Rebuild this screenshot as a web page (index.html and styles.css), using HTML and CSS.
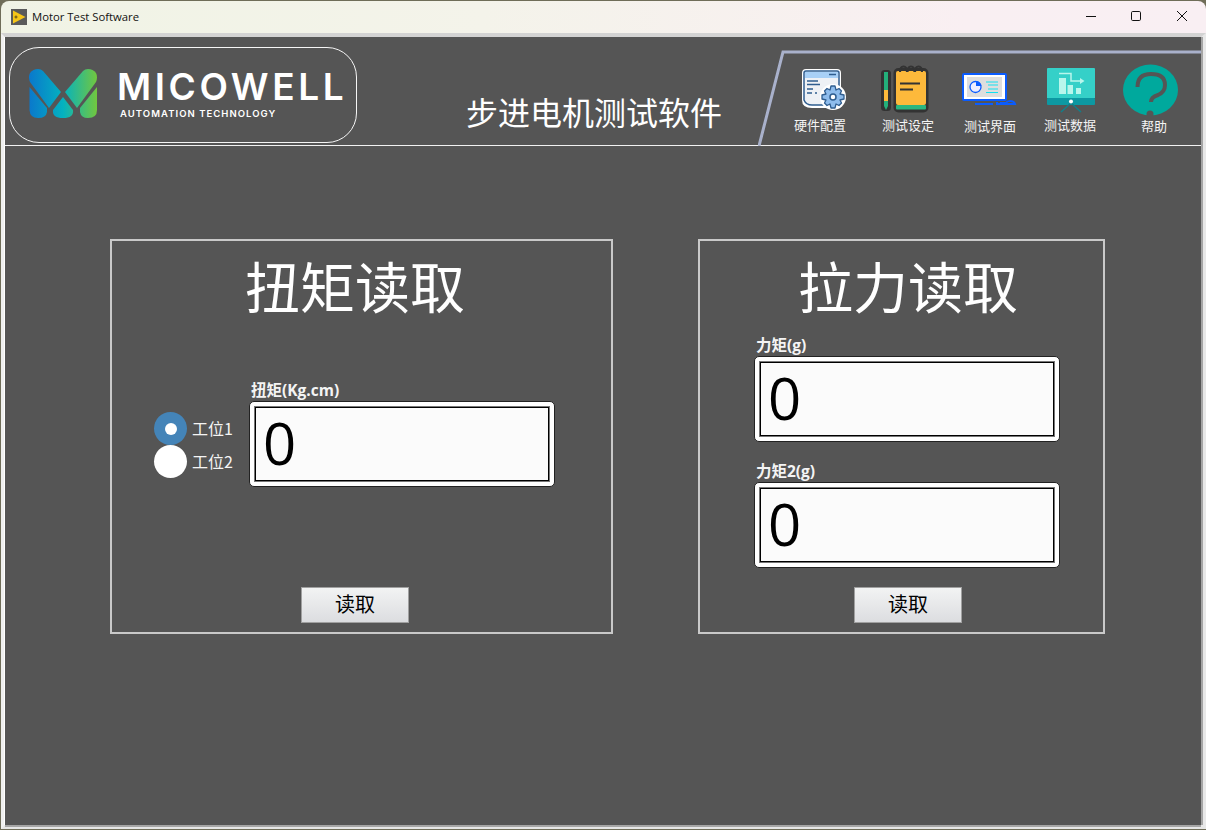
FILE: index.html
```html
<!DOCTYPE html>
<html lang="zh-CN">
<head>
<meta charset="utf-8">
<title>Motor Test Software</title>
<link rel="stylesheet" href="styles.css">
</head>
<body>
<div class="window">
  <div class="titlebar">
    <svg class="app-icon" viewBox="0 0 16 16"><rect width="16" height="16" fill="#5a5a5a"/><path d="M2 1.5 L14.5 8 L2 14.5 Z" fill="#f5c518"/><path d="M5 6.5v3M3.5 8h3" stroke="#5a4a10" stroke-width="1"/></svg>
    <span class="window-title">Motor Test Software</span>
    <div class="controls">
      <svg class="ctl ctl-min" viewBox="0 0 10 10"><path d="M0 5.5H10" stroke="#111" stroke-width="1"/></svg>
      <svg class="ctl ctl-max" viewBox="0 0 10 10"><rect x=".5" y=".5" width="9" height="9" rx="1.2" fill="none" stroke="#111" stroke-width="1"/></svg>
      <svg class="ctl ctl-close" viewBox="0 0 10 10"><path d="M0 0L10 10M10 0L0 10" stroke="#111" stroke-width="1"/></svg>
    </div>
  </div>
  <div class="frame">
    <main class="pane">
      <header class="header">
        <div class="logo">
          <svg class="logo-mark" viewBox="29 69 68 49">
            <defs><linearGradient id="mg" gradientUnits="userSpaceOnUse" x1="29" y1="0" x2="97" y2="0"><stop offset="0" stop-color="#0a78cc"/><stop offset=".5" stop-color="#04b2c0"/><stop offset="1" stop-color="#72c73e"/></linearGradient></defs>
            <g fill="url(#mg)">
              <path d="M30 73 Q33 69 38 69 Q41 69 43 71 L61 92 L49 108 L30 82 Q28 77 30 73Z"/>
              <path d="M29.500 87 L47 108 V112 Q46 118 38 118 Q30 118 29.500 110Z"/>
              <path d="M63 97 L73 110 Q74 118 63 118 Q52 118 53 110Z"/>
              <path d="M96 73 Q93 69 88 69 Q85 69 83 71 L65 92 L77 108 L96 82 Q98 77 96 73Z"/>
              <path d="M97 87 L80 108 V112 Q81 118 88 118 Q97 118 97 110Z"/>
            </g>
          </svg>
          <div class="logo-words">
            <div class="logo-name">MICOWELL</div>
            <div class="logo-sub">AUTOMATION TECHNOLOGY</div>
          </div>
        </div>
        <h1 class="app-title">步进电机测试软件</h1>
        <nav class="tools">
          <div class="tool tool-hw">
            <svg class="tool-icon" viewBox="780 64 80 52">
              <path d="M806 69H837Q841 69 841 73V100L830 108H812Q802 108 802 100V73Q802 69 806 69Z" fill="#fff"/>
              <path d="M804 88V73Q804 71 806 71H837Q839 71 839 73V90L824 105H812Q806 105 804 100Z" fill="#eef1f5" stroke="#2f5d8f" stroke-width="1.500"/>
              <path d="M805 72H838V78H805Z" fill="#a8d0f6"/>
              <path d="M829 74.500H836M807 81H818M807 84.500H820M807 89H813M807 93H812M815 93H817" stroke="#2f5d8f" stroke-width="1.300"/>
              <circle cx="833" cy="97" r="13" fill="#fff"/>
              <g transform="translate(833 97)">
                <path d="M-2-11H2L3-7L6-8.500L8.500-6L7-3L11-2V2L7 3L8.500 6L6 8.500L3 7L2 11H-2L-3 7L-6 8.500L-8.500 6L-7 3L-11 2V-2L-7-3L-8.500-6L-6-8.500L-3-7Z" fill="#8ebcec" stroke="#2f5d8f" stroke-width="1.300" stroke-linejoin="round"/>
                <circle r="3" fill="#fff" stroke="#2f5d8f" stroke-width="1.500"/>
              </g>
            </svg>
            <span class="tool-label">硬件配置</span>
          </div>
          <div class="tool tool-note">
            <svg class="tool-icon" viewBox="868 64 80 52">
              <rect x="881" y="70" width="10" height="41" rx="3.500" fill="#333"/>
              <rect x="884" y="72" width="4" height="19" fill="#23b07a"/>
              <rect x="884" y="90" width="4" height="11" fill="#fdb93b"/>
              <path d="M884 101H888V106L886 110L884 106Z" fill="#23b07a"/>
              <rect x="893.500" y="68" width="35" height="44.500" rx="5" fill="#333"/>
              <rect x="896" y="71" width="30" height="34" rx="2" fill="#fdb93b"/>
              <rect x="896" y="105" width="30" height="4.500" rx="1" fill="#2bb680"/>
              <path d="M900 72Q900 66.500 903.500 66.500T907 72M907.500 72Q907.500 66.500 911 66.500T914.500 72M915 72Q915 66.500 918.500 66.500T922 72" fill="none" stroke="#333" stroke-width="2.200"/>
              <path d="M900 83.500H920M900 89.500H913" stroke="#333" stroke-width="2"/>
            </svg>
            <span class="tool-label">测试设定</span>
          </div>
          <div class="tool tool-screen tool-low">
            <svg class="tool-icon" viewBox="950 64 80 52">
              <rect x="963" y="74" width="43" height="26" rx="1" fill="#fff" stroke="#0a5cff" stroke-width="2"/>
              <rect x="967" y="77" width="35" height="20" fill="#dedede"/>
              <circle cx="975.500" cy="87" r="5.500" fill="#eef" stroke="#0a5cff" stroke-width="1.300"/>
              <path d="M976 86V81A5.500 5.500 0 0 1 981.500 86Z" fill="#0a5cff"/>
              <path d="M986 82H998M988 85H998M988 89H998M986 92.500H998" stroke="#12e0f0" stroke-width="1"/>
              <path d="M975 104H993" stroke="#0a5cff" stroke-width="2"/>
              <path d="M997 102V104H1015Q1014 101 1010 101Q1007 101 1006 103H1000" fill="none" stroke="#0a5cff" stroke-width="2"/>
            </svg>
            <span class="tool-label">测试界面</span>
          </div>
          <div class="tool tool-data">
            <svg class="tool-icon" viewBox="1030 64 80 52">
              <path d="M1048 68H1094Q1095 68 1095 69V98H1047V69Q1047 68 1048 68Z" fill="#35d0c8"/>
              <rect x="1047" y="98" width="48" height="7" rx="1" fill="#0d98a2"/>
              <path d="M1071 103L1061 112M1071 103L1081 112" stroke="#117f8a" stroke-width="1.500"/>
              <circle cx="1071" cy="101.500" r="2" fill="#fff"/>
              <path d="M1059 78H1066V94H1059ZM1067.500 85H1073V94H1067.500ZM1076 88H1081V94H1076Z" fill="#b8f6ec"/>
              <path d="M1059 73.500H1071V81H1081" fill="none" stroke="#b8f6ec" stroke-width="1.500"/>
              <path d="M1080 78L1084.500 81L1080 84Z" fill="#b8f6ec"/>
            </svg>
            <span class="tool-label">测试数据</span>
          </div>
          <div class="tool tool-help tool-low">
            <svg class="tool-icon" viewBox="1114 64 80 52">
              <ellipse cx="1150.500" cy="90" rx="27.500" ry="25.500" fill="#00a99d"/>
              <path d="M1137.500 87Q1137.500 74 1151 74Q1165 74 1165 85Q1165 92 1158 95Q1151 97 1151 102" fill="none" stroke="#555" stroke-width="4"/>
              <circle cx="1150" cy="114" r="3.500" fill="#555"/>
            </svg>
            <span class="tool-label">帮助</span>
          </div>
        </nav>
        <svg class="header-line" viewBox="0 0 443 109"><path d="M1 109L25 15H443" fill="none" stroke="#a9b1cb" stroke-width="3"/></svg>
      </header>
      <section class="panels">
        <div class="panel panel-torque">
          <h2 class="panel-title">扭矩读取</h2>
          <div class="torque-body">
            <div class="radios">
              <label class="radio-row"><span class="radio radio-on"></span><span class="radio-text">工位1</span></label>
              <label class="radio-row"><span class="radio"></span><span class="radio-text">工位2</span></label>
            </div>
            <div class="field">
              <div class="field-label">扭矩(Kg.cm)</div>
              <div class="num-outer"><div class="num-inner">0</div></div>
            </div>
          </div>
          <button class="read-btn">读取</button>
        </div>
        <div class="panel panel-force">
          <h2 class="panel-title">拉力读取</h2>
          <div class="force-body">
            <div class="field">
              <div class="field-label">力矩(g)</div>
              <div class="num-outer"><div class="num-inner">0</div></div>
            </div>
            <div class="field">
              <div class="field-label">力矩2(g)</div>
              <div class="num-outer"><div class="num-inner">0</div></div>
            </div>
          </div>
          <button class="read-btn">读取</button>
        </div>
      </section>
    </main>
  </div>
</div>
</body>
</html>
```
FILE: styles.css
```css
* { box-sizing: border-box; }
html, body { margin: 0; height: 100%; }
body {
  width: 1206px; height: 830px; overflow: hidden;
  padding: 1px 0 1px 1px;
  background: #6f6d58;
  font-family: "Noto Sans CJK SC", "Open Sans", sans-serif;
}
.window {
  width: 100%; height: 100%;
  display: flex; flex-direction: column;
  border-radius: 8px 8px 0 0; overflow: hidden;
}
.titlebar {
  height: 32px; flex: none;
  display: flex; align-items: center;
  padding-left: 10px;
  background: linear-gradient(90deg, #f0f3e5 0%, #f4f3ea 40%, #f9eff2 80%, #f9eff3 100%);
}
.app-icon { width: 16px; height: 16px; display: block; }
.window-title {
  margin-left: 5px;
  font: 11.300px/16px "Open Sans", sans-serif;
  color: #111;
}
.controls { margin-left: auto; display: flex; align-items: center; }
.ctl { width: 10px; height: 10px; display: block; margin-top: -2px; }
.ctl-min { margin-right: 35px; }
.ctl-max { margin-right: 36px; }
.ctl-close { margin-right: 19px; }
.frame {
  flex: 1; display: flex; min-height: 0;
  border-top: 4px solid #d3d3d3;
  border-left: 4px solid #f0f0f0;
  border-right: 5px solid #e8e8e8;
  border-bottom: 4px solid #e6e6e6;
}
.pane {
  flex: 1; min-width: 0;
  background: #555555;
  box-shadow: 0 2px 0 #a5a5a5, 2px 0 0 #a5a5a5, -1px 0 0 #fff;
  display: flex; flex-direction: column;
}
.header {
  position: relative;
  height: 109px; flex: none;
  display: flex; align-items: flex-start;
  border-bottom: 1px solid #f2f2f2;
}
.logo {
  width: 348px; height: 96px;
  margin: 10px 0 0 4px;
  border: 1px solid #f5f5f5;
  border-radius: 30px;
  display: flex; align-items: flex-start;
  padding: 21px 0 0 19px;
}
.logo-mark { width: 68px; height: 49px; display: block; flex: none; }
.logo-words { margin-left: 20px; color: #fff; font-family: "Inter", sans-serif; }
.logo-name {
  font-size: 37px; line-height: 27px; height: 27px; margin-top: 4px;
  font-weight: 600; letter-spacing: 3.600px; white-space: nowrap;
}
.logo-sub {
  margin: 8px 0 0 3px;
  font-size: 9.500px; line-height: 12px;
  font-weight: 600; letter-spacing: 1.050px; white-space: nowrap;
}
.app-title {
  margin: 54px 0 0 109px;
  font-size: 32px; line-height: 40px; font-weight: 400;
  color: #fff; white-space: nowrap;
}
.tools { display: flex; margin: 27px 0 0 58px; }
.tool { width: 80px; display: flex; flex-direction: column; align-items: center; }
.tool-note { margin-left: 8px; }
.tool-screen { margin-left: 2px; }
.tool-help { margin-left: 4px; }
.tool-icon { width: 80px; height: 52px; display: block; flex: none; }
.tool-label { font-size: 13px; line-height: 18px; color: #f4f4f4; white-space: nowrap; }
.tool-low .tool-label { margin-top: 1px; }
.header-line {
  position: absolute; left: 753px; top: 0;
  width: 443px; height: 109px; pointer-events: none;
}
.panels { display: flex; gap: 85px; padding: 93px 0 0 105px; }
.panel {
  height: 395px;
  border: 2px solid #c9c9c9;
  display: flex; flex-direction: column; align-items: flex-start;
  padding-bottom: 9px;
}
.panel-torque { width: 503px; }
.panel-force { width: 407px; }
.panel-title {
  margin: 11px 0 0;
  font-size: 55px; line-height: 64px; font-weight: 400;
  color: #fff; white-space: nowrap;
  align-self: center;
}
.panel-torque .panel-title, .panel-torque .read-btn { margin-right: 13px; }
.panel-force .panel-title, .panel-force .read-btn { margin-left: 13px; }
.torque-body { display: flex; padding: 66px 0 0 42px; }
.radios { width: 95px; padding-top: 30px; display: flex; flex-direction: column; }
.radio-row { display: flex; align-items: center; height: 33px; }
.radio {
  width: 33px; height: 33px; flex: none;
  border-radius: 50%; background: #fff;
  display: flex; align-items: center; justify-content: center;
}
.radio-on { background: #4484b8; }
.radio-on::after { content: ""; width: 12px; height: 12px; border-radius: 50%; background: #fff; }
.radio-text { margin: 0 0 2px 5px; font-size: 16px; line-height: 20px; color: #f4f4f4; white-space: nowrap; }
.field-label {
  height: 19px; padding-left: 2px;
  font-size: 15.500px; line-height: 16px; font-weight: 700;
  color: #f4f4f4; white-space: nowrap;
  font-family: "Open Sans", "Noto Sans CJK SC", sans-serif;
}
.num-outer {
  width: 306px; height: 86px;
  padding: 5px;
  background: #fff;
  border: 1px solid #222;
  border-radius: 5px;
}
.num-inner {
  height: 74px;
  border: 1px solid #000;
  box-shadow: 0 0 0 1px #777;
  background: #fbfbfb;
  color: #000;
  padding-left: 7px;
  font: 58px/70px "Open Sans", sans-serif;
}
.force-body { padding: 21px 0 0 54px; display: flex; flex-direction: column; gap: 21px; }
.read-btn {
  margin-top: auto; align-self: center;
  width: 108px; height: 36px; padding: 0 0 2px;
  border: 1px solid #a0a0a0;
  background: linear-gradient(180deg, #f2f3f3, #dcdde0);
  color: #000;
  font: 20px/28px "Noto Sans CJK SC", sans-serif;
}
```
